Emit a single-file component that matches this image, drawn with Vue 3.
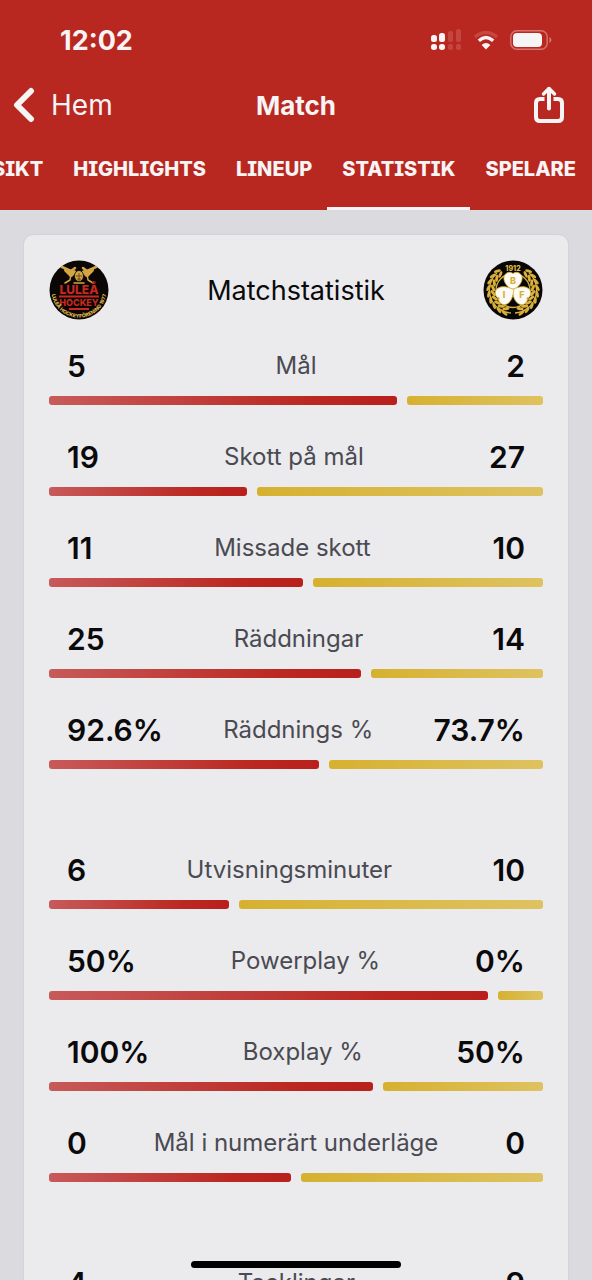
<script setup>
import { ref } from 'vue'

const tabs = ['ÖVERSIKT', 'HIGHLIGHTS', 'LINEUP', 'STATISTIK', 'SPELARE']
const activeTab = ref('STATISTIK')

// share = home team's part of the bar, in percent
const groups = ref([
  {
    id: 1,
    stats: [
      { label: 'Mål', home: '5', away: '2', share: 72 },
      { label: 'Skott på mål', home: '19', away: '27', share: 41 },
      { label: 'Missade skott', home: '11', away: '10', share: 52.5 },
      { label: 'Räddningar', home: '25', away: '14', share: 64.4 },
      { label: 'Räddnings %', home: '92.6%', away: '73.7%', share: 55.8 }
    ]
  },
  {
    id: 2,
    stats: [
      { label: 'Utvisningsminuter', home: '6', away: '10', share: 37.2 },
      { label: 'Powerplay %', home: '50%', away: '0%', share: 90.8 },
      { label: 'Boxplay %', home: '100%', away: '50%', share: 67 },
      { label: 'Mål i numerärt underläge', home: '0', away: '0', share: 50 }
    ]
  },
  {
    id: 3,
    stats: [
      { label: 'Tacklingar', home: '4', away: '9', share: 31 }
    ]
  }
])

// angles of the leaves in one half of the laurel wreath
const leaves = [10, 25, 40, 55, 70, 85, 100, 115, 130]
</script>

<template>
  <div class="app">
    <header class="top">
      <div class="status-bar">
        <span class="clock">12:02</span>
        <div class="status-icons">
          <svg class="signal" viewBox="0 0 31 22" aria-hidden="true">
            <g fill="#f6f4f4">
              <rect x="0" y="6" width="6" height="7" rx="2.5" />
              <rect x="8" y="4" width="6" height="9" rx="2.5" />
              <rect x="0" y="15" width="6" height="6" rx="2.7" />
              <rect x="8" y="15" width="6" height="6" rx="2.7" />
            </g>
            <g fill="#cf5b55" opacity="0.6">
              <rect x="17" y="2" width="5" height="11" rx="2" />
              <rect x="25" y="0" width="5" height="13" rx="2" />
              <rect x="17" y="15" width="5" height="6" rx="2" />
              <rect x="25" y="15" width="5" height="6" rx="2" />
            </g>
          </svg>
          <svg class="wifi" viewBox="0 0 26 20" aria-hidden="true">
            <path d="M2 7 Q13 -2 24 7" fill="none" stroke="#cf5b55" stroke-width="3.4" opacity="0.6" />
            <path d="M5.8 10.8 Q13 4.4 20.2 10.8" fill="none" stroke="#f6f4f4" stroke-width="3.4" />
            <path d="M13 19.5 L8.6 15 Q13 11 17.4 15 Z" fill="#f6f4f4" />
          </svg>
          <svg class="battery" viewBox="0 0 42 20" aria-hidden="true">
            <rect x="0.8" y="0.8" width="36.4" height="18.4" rx="6" fill="none" stroke="#d5736e" stroke-width="1.4" />
            <rect x="3" y="3" width="29" height="14" rx="4" fill="#f6f4f4" />
            <path d="M39.4 7 Q41.5 8 41.5 10 Q41.5 12 39.4 13 Z" fill="#d5736e" />
          </svg>
        </div>
      </div>

      <div class="nav-bar">
        <button class="back-btn">
          <svg viewBox="0 0 22 36" aria-hidden="true">
            <path d="M18 4 L4 18 L18 32" fill="none" stroke="currentColor" stroke-width="6" stroke-linecap="round" stroke-linejoin="round" />
          </svg>
          Hem
        </button>
        <h1>Match</h1>
        <button class="share-btn" aria-label="Dela">
          <svg viewBox="0 0 30 38" aria-hidden="true">
            <g fill="none" stroke="currentColor" stroke-width="4" stroke-linecap="round" stroke-linejoin="round">
              <path d="M10.5 13 H6 Q2 13 2 17 V31 Q2 35 6 35 H24 Q28 35 28 31 V17 Q28 13 24 13 H19.5" stroke-linecap="butt" />
              <path d="M15 3 V22.5" />
              <path d="M9.5 8 L15 2.5 L20.5 8" stroke-width="3.5" />
            </g>
          </svg>
        </button>
      </div>

      <nav class="tabs">
        <button
          v-for="tab in tabs"
          :key="tab"
          :class="['tab', { active: tab === activeTab }]"
          @click="activeTab = tab"
        >{{ tab }}</button>
      </nav>
    </header>

    <main class="content">
      <section class="card">
        <div class="card-header">
          <svg class="crest" viewBox="0 0 60 60" role="img" aria-label="Luleå Hockey">
            <defs>
              <path id="lulea-ring" d="M2.7 26 A27.6 27.6 0 1 0 57.3 26" />
            </defs>
            <circle cx="30" cy="30" r="29.5" fill="#0b0706" />
            <g fill="none" stroke="#d3a545" stroke-linecap="round" stroke-linejoin="round">
              <path d="M13 7 L22 11 L26 8 M47 7 L38 11 L34 8" stroke-width="2.5" />
              <path d="M17 10 L22 15 L25 12 M43 10 L38 15 L35 12" stroke-width="4" />
              <path d="M22 14 L21 20 L16 23 M38 14 L39 20 L44 23 M25 23 H35" stroke-width="1.5" />
            </g>
            <ellipse cx="30" cy="16" rx="4.5" ry="5.5" fill="#d3a545" stroke="#0b0706" stroke-width="0.8" />
            <path d="M27 16 H33 M28 19 H32 M30 13 V21" stroke="#5b3d12" stroke-width="0.8" />
            <g class="crest-bold" fill="#c8281e" text-anchor="middle">
              <text x="30" y="34" font-size="12">LULEÅ</text>
              <text x="30" y="46" font-size="9">HOCKEY</text>
            </g>
            <g fill="none" stroke="#c8281e" stroke-width="1.8">
              <path d="M10 36.5 H50 M20 49 H40" />
            </g>
            <text class="crest-bold" font-size="5" fill="#e2bd4b">
              <textPath href="#lulea-ring" startOffset="50%" text-anchor="middle">LULEÅ HOCKEYFÖRENING 1977</textPath>
            </text>
          </svg>

          <h2>Matchstatistik</h2>

          <svg class="crest" viewBox="0 0 60 60" role="img" aria-label="Brynäs IF">
            <circle cx="30" cy="30" r="29.5" fill="#080706" />
            <text class="crest-bold" x="30" y="11" font-size="7" fill="#e0bd45" text-anchor="middle">1912</text>
            <g fill="none" stroke="#d9b03a" stroke-width="1.3">
              <path d="M14 13 A23 23 0 0 0 28 53 M46 13 A23 23 0 0 1 32 53" />
              <circle cx="30" cy="30.5" r="17" />
            </g>
            <g fill="#d9b03a">
              <g v-for="angle in leaves" :key="angle">
                <g :transform="`rotate(${-angle - 32} 30 30)`">
                  <ellipse cx="31" cy="5.5" rx="3.6" ry="1.5" transform="rotate(25 31 5.5)" />
                  <ellipse cx="31" cy="10" rx="3.6" ry="1.5" transform="rotate(-25 31 10)" />
                </g>
                <g :transform="`rotate(${angle + 32} 30 30)`">
                  <ellipse cx="29" cy="5.5" rx="3.6" ry="1.5" transform="rotate(-25 29 5.5)" />
                  <ellipse cx="29" cy="10" rx="3.6" ry="1.5" transform="rotate(25 29 10)" />
                </g>
              </g>
            </g>
            <g fill="#fbfaf5" stroke="#d9b03a" stroke-width="0.8">
              <path
                v-for="turn in [0, 120, 240]"
                :key="turn"
                :transform="`rotate(${turn} 30 30)`"
                d="M30 31 C26 28 20 23 21 17 C22 12 28 11 30 14 C32 11 38 12 39 17 C40 23 34 28 30 31 Z"
              />
            </g>
            <g class="crest-bold" fill="#d9b03a" font-size="9" text-anchor="middle">
              <text x="30" y="24">B</text>
              <text x="21" y="38">I</text>
              <text x="39" y="38">F</text>
            </g>
          </svg>
        </div>

        <div v-for="group in groups" :key="group.id" class="stat-group">
          <div v-for="stat in group.stats" :key="stat.label" class="stat">
            <div class="stat-text">
              <span class="stat-value">{{ stat.home }}</span>
              <span class="stat-label">{{ stat.label }}</span>
              <span class="stat-value">{{ stat.away }}</span>
            </div>
            <div class="stat-bars">
              <div class="bar home" :style="{ flexGrow: stat.share }"></div>
              <div class="bar away" :style="{ flexGrow: 100 - stat.share }"></div>
            </div>
          </div>
        </div>
      </section>
    </main>

    <div class="home-indicator"></div>
  </div>
</template>

<style>
body {
  background: #dbdade;
}
</style>

<style scoped>
.app {
  position: relative;
  height: 100vh;
  display: flex;
  flex-direction: column;
  overflow: hidden;
  background: #dbdade;
  font-family: Inter, "Liberation Sans", sans-serif;
}

button {
  border: none;
  background: none;
  padding: 0;
  font-family: inherit;
  color: inherit;
  cursor: pointer;
}

svg {
  display: block;
}

.top {
  flex-shrink: 0;
  background: #b82820;
  color: #f6f4f4;
}

.status-bar {
  display: flex;
  justify-content: space-between;
  align-items: center;
  height: 80px;
  padding: 0 40px 0 60px;
}

.clock {
  font-size: 27px;
  font-weight: 700;
}

.status-icons {
  display: flex;
  align-items: center;
  gap: 11px;
}

.signal {
  width: 31px;
  height: 22px;
}

.wifi {
  width: 26px;
  height: 20px;
}

.battery {
  width: 42px;
  height: 20px;
}

.nav-bar {
  display: grid;
  grid-template-columns: 1fr auto 1fr;
  align-items: center;
  height: 50px;
  padding: 0 28px 0 13px;
}

.back-btn {
  display: flex;
  align-items: center;
  justify-self: start;
  gap: 16px;
  font-size: 28px;
}

.back-btn svg {
  width: 22px;
  height: 36px;
}

.nav-bar h1 {
  margin: 0;
  padding-left: 15px;
  font-size: 26px;
  font-weight: 700;
}

.share-btn {
  justify-self: end;
}

.share-btn svg {
  width: 30px;
  height: 38px;
}

.tabs {
  display: flex;
  justify-content: flex-end;
  height: 80px;
  padding-right: 1px;
  overflow: hidden;
}

.tab {
  flex-shrink: 0;
  padding: 0 15px;
  border-bottom: 3px solid transparent;
  font-size: 20px;
  font-weight: 800;
  font-feature-settings: "cv08";
}

.tab.active {
  border-bottom-color: #f6f4f4;
}

.content {
  flex: 1;
  min-height: 0;
  padding: 25px 24px 0;
  overflow: hidden;
}

.card {
  padding: 25px;
  border-radius: 9px;
  background: #ebebed;
  box-shadow: 0 0 2px rgba(0, 0, 0, 0.12);
}

.card-header {
  display: flex;
  justify-content: space-between;
  align-items: center;
  margin-bottom: 26px;
}

.card-header h2 {
  margin: 0;
  font-size: 27px;
  font-weight: 400;
  color: #0a0a0c;
}

.crest {
  width: 60px;
  height: 60px;
}

.crest-bold {
  font-weight: 800;
}

.stat-group {
  display: flex;
  flex-direction: column;
  gap: 32px;
  margin-bottom: 81px;
}

.stat-text {
  display: flex;
  justify-content: space-between;
  align-items: center;
  padding: 0 18px;
  line-height: 40px;
}

.stat-value {
  font-size: 30px;
  font-weight: 600;
  color: #0a0a0c;
}

.stat-label {
  font-size: 24px;
  font-weight: 400;
  font-variant-ligatures: none;
  color: #4a4a52;
}

.stat-bars {
  display: flex;
  gap: 10px;
  margin-top: 10px;
}

.bar {
  flex-basis: 0;
  height: 9px;
  border-radius: 3px;
}

.bar.home {
  background: linear-gradient(to right, #c75a5a, #bb2821 75%, #b9201b);
}

.bar.away {
  background: linear-gradient(to right, #d6b130, #dec260);
}

.home-indicator {
  position: absolute;
  left: 50%;
  bottom: 12px;
  width: 210px;
  height: 7px;
  border-radius: 4px;
  background: #000;
  transform: translateX(-50%);
}
</style>
